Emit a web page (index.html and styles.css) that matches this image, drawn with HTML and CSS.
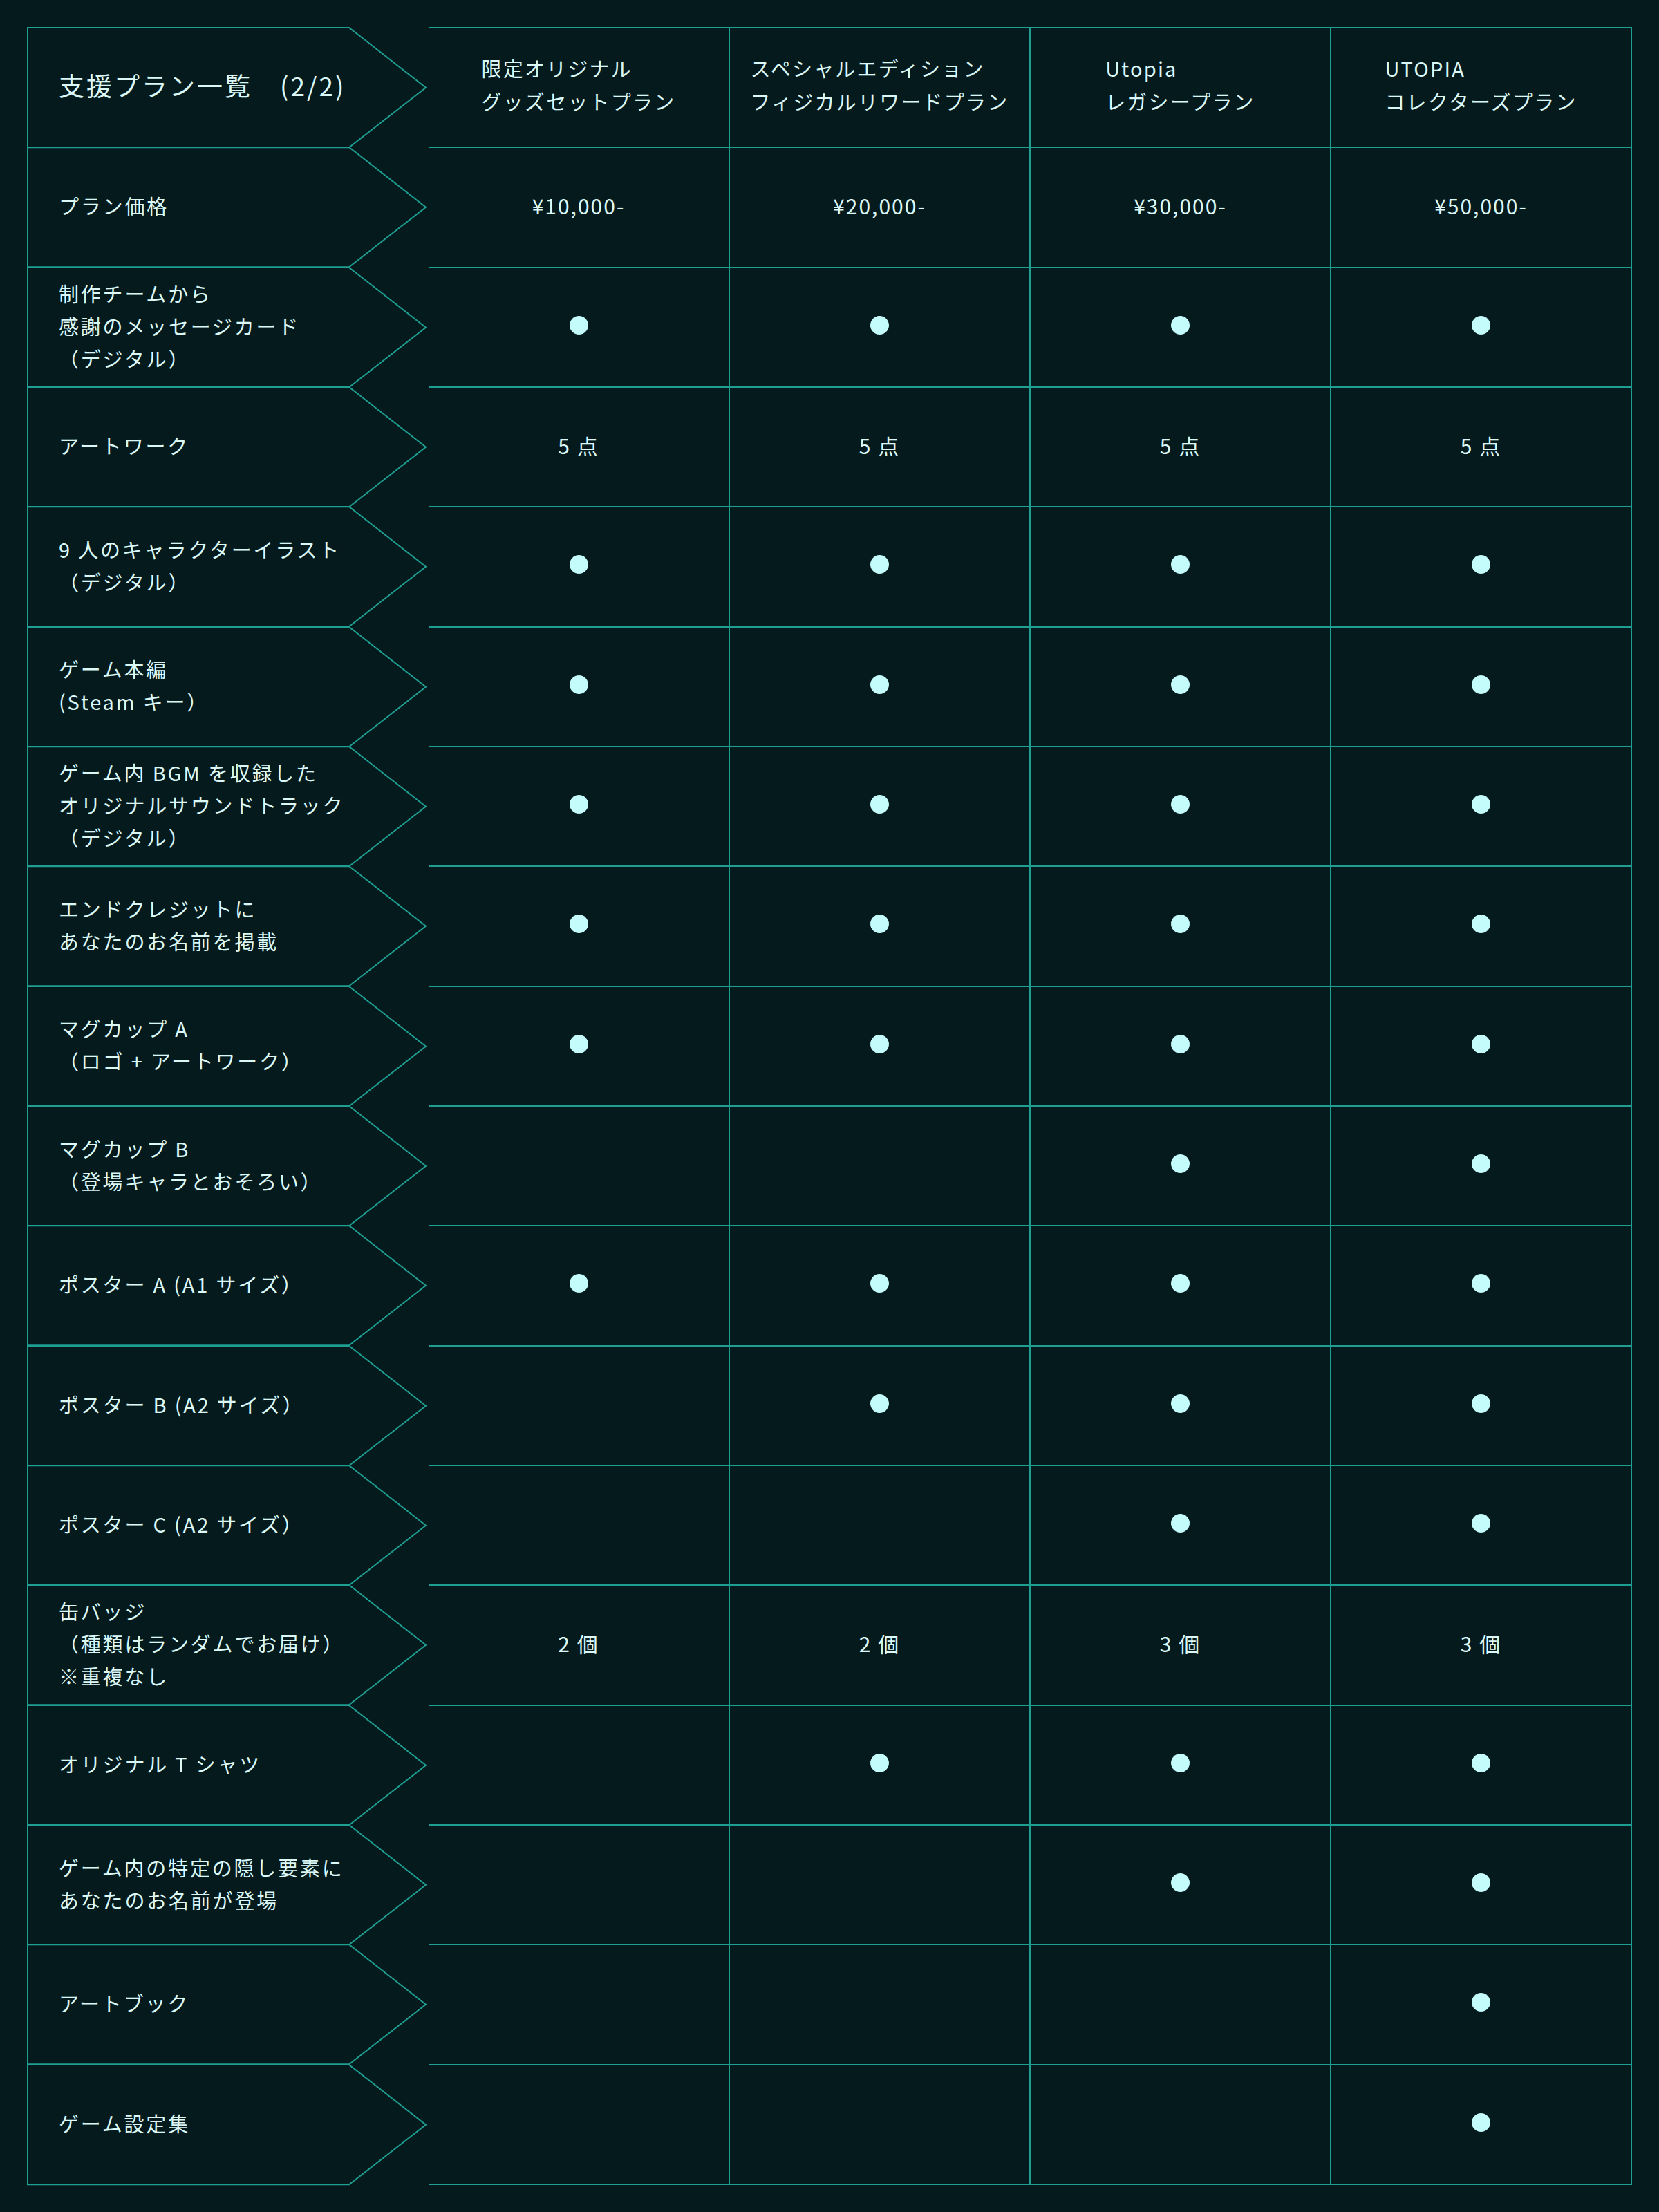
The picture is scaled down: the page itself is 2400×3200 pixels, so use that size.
FILE: index.html
```html
<!DOCTYPE html>
<html lang="ja">
<head>
<meta charset="utf-8">
<title>支援プラン一覧 (2/2)</title>
<link rel="stylesheet" href="styles.css">
</head>
<body>
<div class="table">
  <div class="row">
    <div class="label title"><svg class="arrow" viewBox="0 0 581 175.33" preserveAspectRatio="none"><path d="M1 1H466L577 87.67L466 174.33H1Z"/></svg><span class="label-text">支援プラン一覧　(2/2)</span></div>
    <div class="cell head"><div class="plan">限定オリジナル<br>グッズセットプラン</div></div>
    <div class="cell head"><div class="plan">スペシャルエディション<br>フィジカルリワードプラン</div></div>
    <div class="cell head"><div class="plan">Utopia<br>レガシープラン</div></div>
    <div class="cell head"><div class="plan">UTOPIA<br>コレクターズプラン</div></div>
  </div>
  <div class="row">
    <div class="label"><svg class="arrow" viewBox="0 0 581 175.33" preserveAspectRatio="none"><path d="M1 1H466L577 87.67L466 174.33H1Z"/></svg><span class="label-text">プラン価格</span></div>
    <div class="cell"><span class="val">¥10,000-</span></div>
    <div class="cell"><span class="val">¥20,000-</span></div>
    <div class="cell"><span class="val">¥30,000-</span></div>
    <div class="cell"><span class="val">¥50,000-</span></div>
  </div>
  <div class="row">
    <div class="label"><svg class="arrow" viewBox="0 0 581 175.33" preserveAspectRatio="none"><path d="M1 1H466L577 87.67L466 174.33H1Z"/></svg><span class="label-text">制作チームから<br>感謝のメッセージカード<br>（デジタル）</span></div>
    <div class="cell"><span class="dot"></span></div>
    <div class="cell"><span class="dot"></span></div>
    <div class="cell"><span class="dot"></span></div>
    <div class="cell"><span class="dot"></span></div>
  </div>
  <div class="row">
    <div class="label"><svg class="arrow" viewBox="0 0 581 175.33" preserveAspectRatio="none"><path d="M1 1H466L577 87.67L466 174.33H1Z"/></svg><span class="label-text">アートワーク</span></div>
    <div class="cell"><span class="val">5 点</span></div>
    <div class="cell"><span class="val">5 点</span></div>
    <div class="cell"><span class="val">5 点</span></div>
    <div class="cell"><span class="val">5 点</span></div>
  </div>
  <div class="row">
    <div class="label"><svg class="arrow" viewBox="0 0 581 175.33" preserveAspectRatio="none"><path d="M1 1H466L577 87.67L466 174.33H1Z"/></svg><span class="label-text">9 人のキャラクターイラスト<br>（デジタル）</span></div>
    <div class="cell"><span class="dot"></span></div>
    <div class="cell"><span class="dot"></span></div>
    <div class="cell"><span class="dot"></span></div>
    <div class="cell"><span class="dot"></span></div>
  </div>
  <div class="row">
    <div class="label"><svg class="arrow" viewBox="0 0 581 175.33" preserveAspectRatio="none"><path d="M1 1H466L577 87.67L466 174.33H1Z"/></svg><span class="label-text">ゲーム本編<br>(Steam キー）</span></div>
    <div class="cell"><span class="dot"></span></div>
    <div class="cell"><span class="dot"></span></div>
    <div class="cell"><span class="dot"></span></div>
    <div class="cell"><span class="dot"></span></div>
  </div>
  <div class="row">
    <div class="label"><svg class="arrow" viewBox="0 0 581 175.33" preserveAspectRatio="none"><path d="M1 1H466L577 87.67L466 174.33H1Z"/></svg><span class="label-text">ゲーム内 BGM を収録した<br>オリジナルサウンドトラック<br>（デジタル）</span></div>
    <div class="cell"><span class="dot"></span></div>
    <div class="cell"><span class="dot"></span></div>
    <div class="cell"><span class="dot"></span></div>
    <div class="cell"><span class="dot"></span></div>
  </div>
  <div class="row">
    <div class="label"><svg class="arrow" viewBox="0 0 581 175.33" preserveAspectRatio="none"><path d="M1 1H466L577 87.67L466 174.33H1Z"/></svg><span class="label-text">エンドクレジットに<br>あなたのお名前を掲載</span></div>
    <div class="cell"><span class="dot"></span></div>
    <div class="cell"><span class="dot"></span></div>
    <div class="cell"><span class="dot"></span></div>
    <div class="cell"><span class="dot"></span></div>
  </div>
  <div class="row">
    <div class="label"><svg class="arrow" viewBox="0 0 581 175.33" preserveAspectRatio="none"><path d="M1 1H466L577 87.67L466 174.33H1Z"/></svg><span class="label-text">マグカップ A<br>（ロゴ + アートワーク）</span></div>
    <div class="cell"><span class="dot"></span></div>
    <div class="cell"><span class="dot"></span></div>
    <div class="cell"><span class="dot"></span></div>
    <div class="cell"><span class="dot"></span></div>
  </div>
  <div class="row">
    <div class="label"><svg class="arrow" viewBox="0 0 581 175.33" preserveAspectRatio="none"><path d="M1 1H466L577 87.67L466 174.33H1Z"/></svg><span class="label-text">マグカップ B<br>（登場キャラとおそろい）</span></div>
    <div class="cell"></div>
    <div class="cell"></div>
    <div class="cell"><span class="dot"></span></div>
    <div class="cell"><span class="dot"></span></div>
  </div>
  <div class="row">
    <div class="label"><svg class="arrow" viewBox="0 0 581 175.33" preserveAspectRatio="none"><path d="M1 1H466L577 87.67L466 174.33H1Z"/></svg><span class="label-text">ポスター A (A1 サイズ）</span></div>
    <div class="cell"><span class="dot"></span></div>
    <div class="cell"><span class="dot"></span></div>
    <div class="cell"><span class="dot"></span></div>
    <div class="cell"><span class="dot"></span></div>
  </div>
  <div class="row">
    <div class="label"><svg class="arrow" viewBox="0 0 581 175.33" preserveAspectRatio="none"><path d="M1 1H466L577 87.67L466 174.33H1Z"/></svg><span class="label-text">ポスター B (A2 サイズ）</span></div>
    <div class="cell"></div>
    <div class="cell"><span class="dot"></span></div>
    <div class="cell"><span class="dot"></span></div>
    <div class="cell"><span class="dot"></span></div>
  </div>
  <div class="row">
    <div class="label"><svg class="arrow" viewBox="0 0 581 175.33" preserveAspectRatio="none"><path d="M1 1H466L577 87.67L466 174.33H1Z"/></svg><span class="label-text">ポスター C (A2 サイズ）</span></div>
    <div class="cell"></div>
    <div class="cell"></div>
    <div class="cell"><span class="dot"></span></div>
    <div class="cell"><span class="dot"></span></div>
  </div>
  <div class="row">
    <div class="label"><svg class="arrow" viewBox="0 0 581 175.33" preserveAspectRatio="none"><path d="M1 1H466L577 87.67L466 174.33H1Z"/></svg><span class="label-text">缶バッジ<br>（種類はランダムでお届け）<br>※重複なし</span></div>
    <div class="cell"><span class="val">2 個</span></div>
    <div class="cell"><span class="val">2 個</span></div>
    <div class="cell"><span class="val">3 個</span></div>
    <div class="cell"><span class="val">3 個</span></div>
  </div>
  <div class="row">
    <div class="label"><svg class="arrow" viewBox="0 0 581 175.33" preserveAspectRatio="none"><path d="M1 1H466L577 87.67L466 174.33H1Z"/></svg><span class="label-text">オリジナル T シャツ</span></div>
    <div class="cell"></div>
    <div class="cell"><span class="dot"></span></div>
    <div class="cell"><span class="dot"></span></div>
    <div class="cell"><span class="dot"></span></div>
  </div>
  <div class="row">
    <div class="label"><svg class="arrow" viewBox="0 0 581 175.33" preserveAspectRatio="none"><path d="M1 1H466L577 87.67L466 174.33H1Z"/></svg><span class="label-text">ゲーム内の特定の隠し要素に<br>あなたのお名前が登場</span></div>
    <div class="cell"></div>
    <div class="cell"></div>
    <div class="cell"><span class="dot"></span></div>
    <div class="cell"><span class="dot"></span></div>
  </div>
  <div class="row">
    <div class="label"><svg class="arrow" viewBox="0 0 581 175.33" preserveAspectRatio="none"><path d="M1 1H466L577 87.67L466 174.33H1Z"/></svg><span class="label-text">アートブック</span></div>
    <div class="cell"></div>
    <div class="cell"></div>
    <div class="cell"></div>
    <div class="cell"><span class="dot"></span></div>
  </div>
  <div class="row">
    <div class="label"><svg class="arrow" viewBox="0 0 581 175.33" preserveAspectRatio="none"><path d="M1 1H466L577 87.67L466 174.33H1Z"/></svg><span class="label-text">ゲーム設定集</span></div>
    <div class="cell"></div>
    <div class="cell"></div>
    <div class="cell"></div>
    <div class="cell"><span class="dot"></span></div>
  </div>
</div>
</body>
</html>
```

FILE: styles.css
```css
html, body {
  margin: 0;
  padding: 0;
  background: #041a1d;
}

body {
  width: 2400px;
  min-height: 3200px;
  color: #dbf8f6;
  font-family: "Noto Sans CJK JP", "Noto Sans", sans-serif;
  font-weight: 400;
}

.table {
  display: grid;
  grid-template-columns: 581px 436px 435px 435px 435px;
  grid-auto-rows: 173.33px;
  margin: 39px 0 0 39px;
  width: 2322px;
}

.row {
  display: contents;
}

.label {
  position: relative;
  display: flex;
  align-items: center;
  padding-left: 46px;
}

.arrow {
  position: absolute;
  top: 0;
  left: 0;
  width: 581px;
  height: calc(100% + 2px);
  overflow: visible;
}

.arrow path {
  fill: none;
  stroke: #1e9f92;
  stroke-width: 2;
  stroke-linejoin: miter;
}

.label-text {
  position: relative;
  font-size: 29px;
  line-height: 47px;
  letter-spacing: 2.8px;
  margin-top: -2px;
}

.title .label-text {
  font-size: 37px;
  letter-spacing: 3px;
  margin-top: -5px;
}

.cell {
  box-sizing: border-box;
  border-top: 2px solid #1e9f92;
  border-right: 2px solid #1e9f92;
  display: flex;
  align-items: center;
  justify-content: center;
}

.row:last-child .cell {
  box-shadow: 0 2px 0 #1e9f92;
}

.plan {
  text-align: left;
  font-size: 29px;
  line-height: 48px;
  letter-spacing: 2.2px;
  margin-top: -9px;
}

.val {
  font-size: 30px;
  letter-spacing: 2px;
  margin-top: -5px;
}

.dot {
  width: 27px;
  height: 27px;
  border-radius: 50%;
  background: #c4fbfb;
  margin-top: -6px;
}
```
